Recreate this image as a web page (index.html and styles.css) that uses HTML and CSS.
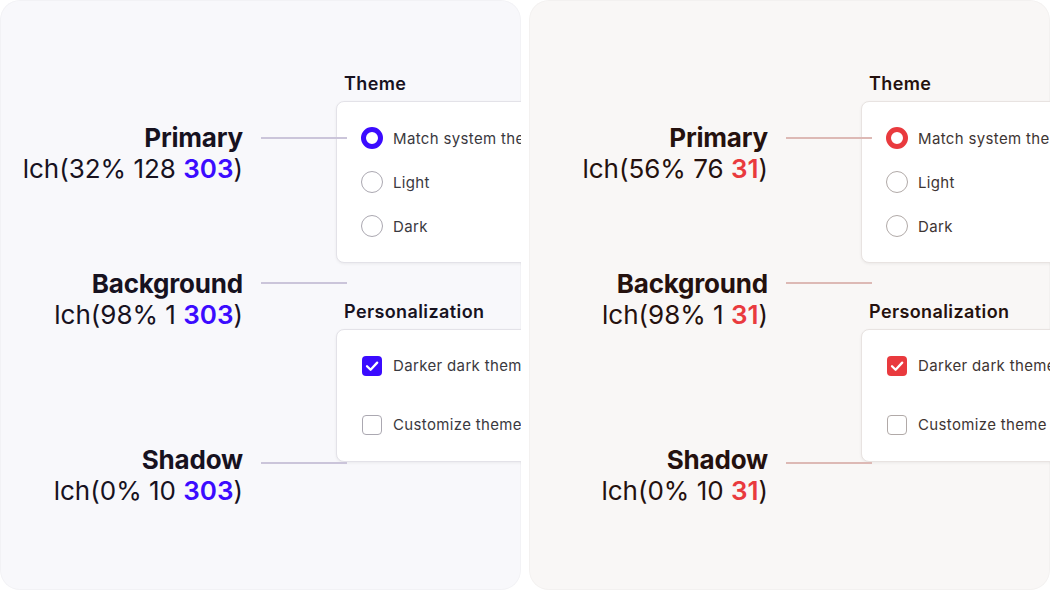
FILE: index.html
```html
<html><head>
  <title>Theme colours</title>
  <link rel="stylesheet" href="styles.css">
</head>
<body>
<div class="panels">

  <!-- pannello viola -->
  <section class="panel panel-cool">
    <div class="notes">
      <div class="note note-primary">
        <div class="note-label">Primary</div>
        <div class="note-line"></div>
        <div class="note-value">lch(32% 128 <span class="hue">303</span>)</div>
      </div>
      <div class="note note-background">
        <div class="note-label">Background</div>
        <div class="note-line"></div>
        <div class="note-value">lch(98% 1 <span class="hue">303</span>)</div>
      </div>
      <div class="note note-shadow">
        <div class="note-label">Shadow</div>
        <div class="note-line"></div>
        <div class="note-value">lch(0% 10 <span class="hue">303</span>)</div>
      </div>
    </div>

    <div class="settings">
      <div class="group-title">Theme</div>
      <div class="card card-theme">
        <div class="option"><span class="radio checked"></span>Match system theme</div>
        <div class="option"><span class="radio"></span>Light</div>
        <div class="option"><span class="radio"></span>Dark</div>
      </div>
      <div class="group-title group-second">Personalization</div>
      <div class="card card-personal">
        <div class="option option-tall">
          <span class="check checked"><svg viewBox="0 0 20 20" width="20" height="20"><polyline points="5,10.2 8.6,13.8 15.2,6.6" fill="none" stroke="#fff" stroke-width="2.3" stroke-linecap="round" stroke-linejoin="round"/></svg></span>Darker dark theme
        </div>
        <div class="option option-tall"><span class="check"></span>Customize theme</div>
      </div>
    </div>
  </section>

  <!-- pannello rosso -->
  <section class="panel panel-warm">
    <div class="notes">
      <div class="note note-primary">
        <div class="note-label">Primary</div>
        <div class="note-line"></div>
        <div class="note-value">lch(56% 76 <span class="hue">31</span>)</div>
      </div>
      <div class="note note-background">
        <div class="note-label">Background</div>
        <div class="note-line"></div>
        <div class="note-value">lch(98% 1 <span class="hue">31</span>)</div>
      </div>
      <div class="note note-shadow">
        <div class="note-label">Shadow</div>
        <div class="note-line"></div>
        <div class="note-value">lch(0% 10 <span class="hue">31</span>)</div>
      </div>
    </div>

    <div class="settings">
      <div class="group-title">Theme</div>
      <div class="card card-theme">
        <div class="option"><span class="radio checked"></span>Match system theme</div>
        <div class="option"><span class="radio"></span>Light</div>
        <div class="option"><span class="radio"></span>Dark</div>
      </div>
      <div class="group-title group-second">Personalization</div>
      <div class="card card-personal">
        <div class="option option-tall">
          <span class="check checked"><svg viewBox="0 0 20 20" width="20" height="20"><polyline points="5,10.2 8.6,13.8 15.2,6.6" fill="none" stroke="#fff" stroke-width="2.3" stroke-linecap="round" stroke-linejoin="round"/></svg></span>Darker dark theme
        </div>
        <div class="option option-tall"><span class="check"></span>Customize theme</div>
      </div>
    </div>
  </section>

</div>
</body></html>
```

FILE: styles.css
```css
body {
  margin: 0;
  background: #ffffff;
  font-family: Inter, "Noto Sans", sans-serif;
}

.panels {
  display: flex;
  gap: 8px;
}

.panel {
  width: 521px;
  height: 590px;
  flex: none;
  display: flex;
  overflow: hidden;
  border-radius: 20px;
  box-shadow: inset 0 0 0 1px rgba(0, 0, 0, 0.025);
}

/* colori del pannello viola */
.panel-cool {
  background: #f8f8fb;
  --ink: #17121f;
  --accent: #3b0bff;
  --rule: #cbc5da;
  --text: #3a3940;
  --border: #e3e2e8;
  --ring: #aba8b1;
}

/* colori del pannello rosso */
.panel-warm {
  background: #f9f7f6;
  --ink: #25110e;
  --accent: #e93a3e;
  --rule: #ddb9b5;
  --text: #3e3533;
  --border: #e8e3e1;
  --ring: #b1aaa8;
}

.panel-warm .notes {
  margin-left: -4px;
}

.notes {
  flex: none;
  padding-top: 122px;
  position: relative;
  z-index: 1;
  color: var(--ink);
}

.note {
  display: grid;
  grid-template-columns: 243px 86px;
  column-gap: 18px;
  font-size: 26px;
  line-height: 31px;
}

.note-background {
  margin-top: 84px;
}

.note-shadow {
  margin-top: 114px;
}

.note-label {
  text-align: right;
  font-weight: 700;
  letter-spacing: -0.2px;
}

.note-line {
  align-self: center;
  height: 2px;
  background: var(--rule);
}

.note-background .note-line {
  margin-bottom: 2px;
}

.note-shadow .note-line {
  margin-top: 6px;
}

.note-value {
  text-align: right;
  font-weight: 400;
}

.hue {
  color: var(--accent);
  font-weight: 600;
}

.settings {
  flex: none;
  margin-left: -11px;
  padding-top: 74px;
}

.group-title {
  padding-left: 8px;
  font-size: 18px;
  line-height: 20px;
  font-weight: 600;
  letter-spacing: 0.4px;
  color: var(--ink);
}

.group-second {
  margin-top: 39px;
}

.card {
  width: 320px;
  margin-top: 7px;
  background: #ffffff;
  border: 1px solid var(--border);
  border-radius: 8px;
  box-shadow: 0 1px 3px rgba(0, 0, 0, 0.06);
  white-space: nowrap;
}

.card-theme {
  padding: 14px 24px;
}

.card-personal {
  padding: 6px 24px 7px;
}

.option {
  height: 44px;
  display: flex;
  align-items: center;
  gap: 10px;
  font-size: 15px;
  color: var(--text);
  letter-spacing: 0.35px;
}

.option-tall {
  height: 59px;
}

.radio {
  width: 22px;
  height: 22px;
  box-sizing: border-box;
  border: 1.5px solid var(--ring);
  border-radius: 50%;
  flex: none;
}

.radio.checked {
  border: 5px solid var(--accent);
}

.check {
  width: 20px;
  height: 20px;
  margin: 0 1px;
  box-sizing: border-box;
  border: 1.5px solid var(--ring);
  border-radius: 4px;
  flex: none;
}

.check.checked {
  border: none;
  background: var(--accent);
}

.check svg {
  display: block;
}
```
